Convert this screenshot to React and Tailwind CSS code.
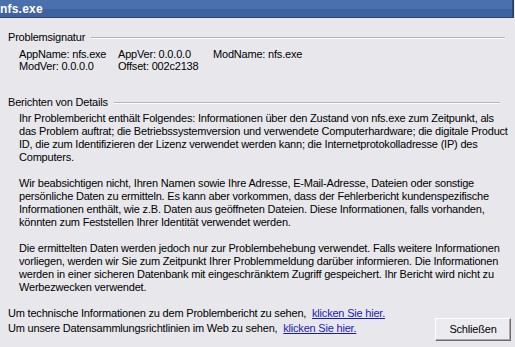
import React from "react";

const font = { fontFamily: '"Liberation Sans", Arial, sans-serif' };

const GroupHeader = ({ title, lineRight }) => (
  <div className="flex items-center h-[13px]">
    <span className="pl-2 pr-[6px] whitespace-nowrap">{title}</span>
    <div className={`flex-1 flex flex-col ${lineRight}`}>
      <div className="h-px bg-[#b4b4b8]" />
      <div className="h-px bg-white" />
    </div>
  </div>
);

const App = () => {
  return (
    <div
      className="w-[515px] h-[347px] bg-[#e8e8ec] text-[11px] leading-[13px] tracking-[-0.2px] text-black overflow-hidden flex flex-col"
      style={font}
    >
      {/* Title bar */}
      <div className="h-[18px] flex flex-col border-b border-[#2c4470] border-r-[2px] border-r-[#2c4470] mr-[1px]">
        <div className="h-[9px] bg-[#4a70ad] flex items-end">
          <span className="text-white font-bold text-[12px] leading-[12px] translate-y-[6px] tracking-[0.2px]">
            nfs.exe
          </span>
        </div>
        <div className="flex-1 bg-[#3f63a0]" />
      </div>

      {/* Problemsignatur */}
      <div className="mt-[13px]">
        <GroupHeader title="Problemsignatur" lineRight="mr-[10px]" />
        <div className="mt-[4px] pl-[19px] grid grid-cols-[99px_95px_auto] leading-[12px]">
          <span>AppName: nfs.exe</span>
          <span>AppVer: 0.0.0.0</span>
          <span>ModName: nfs.exe</span>
          <span>ModVer: 0.0.0.0</span>
          <span>Offset: 002c2138</span>
          <span />
        </div>
      </div>

      {/* Berichten von Details */}
      <div className="mt-[24px]">
        <GroupHeader title="Berichten von Details" lineRight="mr-[15px]" />
        <div className="mt-[3px] pl-[19px] whitespace-nowrap flex flex-col gap-[13px]">
          <div className="flex flex-col">
            <span>Ihr Problembericht enthält Folgendes: Informationen über den Zustand von nfs.exe zum Zeitpunkt, als</span>
            <span>das Problem auftrat; die Betriebssystemversion und verwendete Computerhardware; die digitale Product</span>
            <span>ID, die zum Identifizieren der Lizenz verwendet werden kann; die Internetprotokolladresse (IP) des</span>
            <span>Computers.</span>
          </div>
          <div className="flex flex-col">
            <span>Wir beabsichtigen nicht, Ihren Namen sowie Ihre Adresse, E-Mail-Adresse, Dateien oder sonstige</span>
            <span>persönliche Daten zu ermitteln. Es kann aber vorkommen, dass der Fehlerbericht kundenspezifische</span>
            <span>Informationen enthält, wie z.B. Daten aus geöffneten Dateien. Diese Informationen, falls vorhanden,</span>
            <span>könnten zum Feststellen Ihrer Identität verwendet werden.</span>
          </div>
          <div className="flex flex-col">
            <span>Die ermittelten Daten werden jedoch nur zur Problembehebung verwendet. Falls weitere Informationen</span>
            <span>vorliegen, werden wir Sie zum Zeitpunkt Ihrer Problemmeldung darüber informieren. Die Informationen</span>
            <span>werden in einer sicheren Datenbank mit eingeschränktem Zugriff gespeichert. Ihr Bericht wird nicht zu</span>
            <span>Werbezwecken verwendet.</span>
          </div>
        </div>
      </div>

      {/* Footer */}
      <div className="mt-[13px] flex items-start">
        <div className="pl-2 flex flex-col gap-[2px] whitespace-nowrap">
          <div>
            Um technische Informationen zu dem Problembericht zu sehen,{" "}
            <a href="#" className="ml-[3px] text-[#1a1ab4] underline">
              klicken Sie hier.
            </a>
          </div>
          <div>
            Um unsere Datensammlungsrichtlinien im Web zu sehen,{" "}
            <a href="#" className="ml-[3px] text-[#1a1ab4] underline">
              klicken Sie hier.
            </a>
          </div>
        </div>
        <div className="flex-1" />
        <button className="mt-[11px] mr-[4px] w-[76px] h-[23px] bg-[#ececf0] border border-t-white border-l-white border-r-[#6b6b70] border-b-[#6b6b70] shadow-[inset_-1px_-1px_0_#a8a8ad] text-[11px]">
          Schließen
        </button>
      </div>
    </div>
  );
};

export default App;
